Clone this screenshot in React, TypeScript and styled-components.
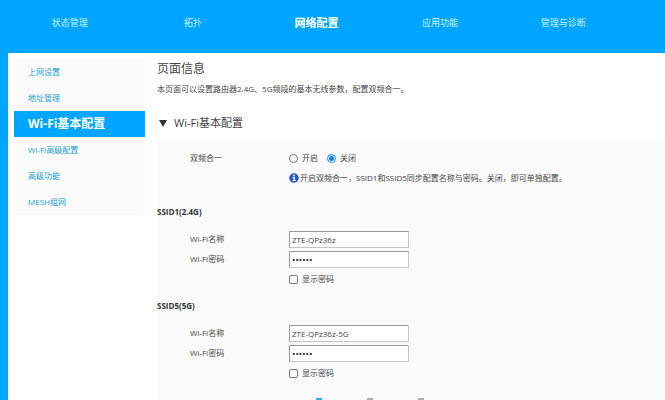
import React from "react";
import styled, { createGlobalStyle } from "styled-components";

const accent = "#00a5ff";
const panel = "#fafafa";

const GlobalStyle = createGlobalStyle`
  * { box-sizing: border-box; }
  body {
    margin: 0;
    background: #fff;
    color: #444;
    font-family: "Open Sans", "Noto Sans CJK SC", sans-serif;
    font-size: 8px;
    line-height: 12px;
  }
`;

const Page = styled.div`
  display: flex;
  flex-direction: column;
  height: 100vh;
  overflow: hidden;
`;

const Header = styled.header`
  flex: none;
  padding: 13px 40px 20px 8px;
  background: ${accent};
`;

const Nav = styled.nav`
  display: grid;
  grid-template-columns: repeat(5, 1fr);
  align-items: center;
`;

const NavLink = styled.a<{ $active?: boolean }>`
  color: ${(p) => (p.$active ? "#fff" : "#c4f2ff")};
  font-size: ${(p) => (p.$active ? "11px" : "9px")};
  font-weight: ${(p) => (p.$active ? 700 : 400)};
  line-height: 20px;
  text-align: center;
  text-decoration: none;
`;

const Body = styled.div`
  display: flex;
  flex: 1;
  align-items: stretch;
  border-left: 8px solid ${accent};
`;

const Sidebar = styled.nav`
  flex: none;
  align-self: flex-start;
  width: 131px;
  margin: 6px 12px 0 6px;
  background: ${panel};
`;

const SideLink = styled.a<{ $active?: boolean }>`
  display: block;
  padding-left: 14px;
  color: ${(p) => (p.$active ? "#fff" : "#1c9fcc")};
  background: ${(p) => (p.$active ? accent : "transparent")};
  font-size: ${(p) => (p.$active ? "12px" : "8px")};
  font-weight: ${(p) => (p.$active ? 700 : 400)};
  line-height: 26px;
  text-decoration: none;
`;

const Main = styled.main`
  display: flex;
  flex: 1;
  flex-direction: column;
  min-width: 0;
`;

const Title = styled.h1`
  margin: 6px 0 0;
  font-size: 12px;
  font-weight: 400;
  line-height: 20px;
`;

const Description = styled.p`
  margin: 4px 0 0;
`;

const SectionButton = styled.button`
  display: flex;
  align-items: center;
  gap: 7px;
  margin: 18px 0 9px;
  padding: 0 0 0 2px;
  border: 0;
  background: none;
  color: #444;
  font: inherit;
  font-size: 11px;
  line-height: 20px;
`;

const Panel = styled.form`
  flex: 1;
  padding-top: 6px;
  background: ${panel};
`;

const Row = styled.div`
  display: grid;
  grid-template-columns: 99px 1fr;
  align-items: center;
  min-height: 20px;
  padding-left: 33px;
`;

const Controls = styled.div`
  display: flex;
  grid-column: 2;
  align-items: center;
`;

const Choice = styled.label`
  display: flex;
  align-items: center;
  gap: 4px;
  margin-right: 9px;
`;

const Radio = styled.input`
  appearance: none;
  width: 9px;
  height: 9px;
  margin: 0;
  border: 1px solid #777;
  border-radius: 50%;
  background: #fff;
  &:checked {
    border-color: #0a84ea;
    background: radial-gradient(circle, #0a84ea 2px, #fff 3px);
  }
`;

const Checkbox = styled.input`
  appearance: none;
  width: 9px;
  height: 9px;
  margin: 0;
  border: 1px solid #777;
  border-radius: 2px;
  background: #fff;
  &:checked { background: #0a84ea; }
`;

const Hint = styled.span`
  display: flex;
  align-items: center;
  gap: 1px;
`;

const Groups = styled.div`
  display: flex;
  flex-direction: column;
  gap: 7px;
  margin-top: 14px;
`;

const Group = styled.fieldset`
  min-width: 0;
  margin: 0;
  padding: 0;
  border: 0;
`;

const GroupTitle = styled.legend`
  padding: 0;
  margin-bottom: 7px;
  color: #333;
  font-weight: 700;
  line-height: 20px;
`;

const TextInput = styled.input`
  width: 120px;
  height: 17px;
  padding: 0 2px;
  border: 1px solid #c4c4c4;
  border-top-color: #999;
  border-left-color: #999;
  border-radius: 1px;
  background: #fff;
  color: #444;
  font: inherit;
  &[type="password"] { color: #222; font-size: 9px; }
`;

const Pager = styled.div`
  display: flex;
  gap: 45px;
  margin: 15px 0 0 159px;
`;

const PagerButton = styled.button<{ $active?: boolean }>`
  width: 6px;
  height: 6px;
  padding: 0;
  border: 0;
  background: ${(p) => (p.$active ? "#22aed6" : "#aaa")};
`;

const navItems = ["状态管理", "拓扑", "网络配置", "应用功能", "管理与诊断"];
const sideItems = ["上网设置", "地址管理", "Wi-Fi基本配置", "Wi-Fi高级配置", "高级功能", "MESH组网"];
const networks = [
  { id: "ssid1", title: "SSID1(2.4G)", name: "ZTE-QPz36z" },
  { id: "ssid5", title: "SSID5(5G)", name: "ZTE-QPz36z-5G" },
];

function InfoIcon() {
  return (
    <svg width="10" height="10" viewBox="0 0 20 20" aria-hidden="true">
      <circle cx="10" cy="10" r="9.5" fill="#1f55cf" />
      <circle cx="10" cy="5" r="2" fill="#fff" />
      <path d="M7 8h5v6h2v2H7v-2h2v-4H7z" fill="#fff" />
    </svg>
  );
}

function NetworkGroup({ id, title, name }: { id: string; title: string; name: string }) {
  const [visible, setVisible] = React.useState(false);
  return (
    <Group>
      <GroupTitle>{title}</GroupTitle>
      <Row>
        <label htmlFor={`${id}-name`}>Wi-Fi名称</label>
        <TextInput id={`${id}-name`} defaultValue={name} />
      </Row>
      <Row>
        <label htmlFor={`${id}-password`}>Wi-Fi密码</label>
        <TextInput id={`${id}-password`} type={visible ? "text" : "password"} defaultValue="••••••" />
      </Row>
      <Row>
        <Controls>
          <Choice>
            <Checkbox type="checkbox" checked={visible} onChange={(e) => setVisible(e.target.checked)} />
            显示密码
          </Choice>
        </Controls>
      </Row>
    </Group>
  );
}

export default function App() {
  return (
    <>
      <GlobalStyle />
      <Page>
        <Header>
          <Nav>
            {navItems.map((item, i) => (
              <NavLink key={item} href="#" $active={i === 2}>{item}</NavLink>
            ))}
          </Nav>
        </Header>
        <Body>
          <Sidebar>
            {sideItems.map((item, i) => (
              <SideLink key={item} href="#" $active={i === 2}>{item}</SideLink>
            ))}
          </Sidebar>
          <Main>
            <Title>页面信息</Title>
            <Description>本页面可以设置路由器2.4G、5G频段的基本无线参数，配置双频合一。</Description>
            <SectionButton type="button">
              <svg width="8" height="8" viewBox="0 0 8 8" aria-hidden="true">
                <path d="M0 1h8L4 8z" fill="#333" />
              </svg>
              Wi-Fi基本配置
            </SectionButton>
            <Panel>
              <Row role="radiogroup" aria-labelledby="band-label">
                <span id="band-label">双频合一</span>
                <Controls>
                  <Choice><Radio type="radio" name="band" />开启</Choice>
                  <Choice><Radio type="radio" name="band" defaultChecked />关闭</Choice>
                </Controls>
              </Row>
              <Row>
                <Controls>
                  <Hint>
                    <InfoIcon />
                    开启双频合一，SSID1和SSID5同步配置名称与密码。关闭，即可单独配置。
                  </Hint>
                </Controls>
              </Row>
              <Groups>
                {networks.map((n) => <NetworkGroup key={n.id} {...n} />)}
              </Groups>
              <Pager>
                <PagerButton type="button" aria-label="1" $active />
                <PagerButton type="button" aria-label="2" />
                <PagerButton type="button" aria-label="3" />
              </Pager>
            </Panel>
          </Main>
        </Body>
      </Page>
    </>
  );
}
